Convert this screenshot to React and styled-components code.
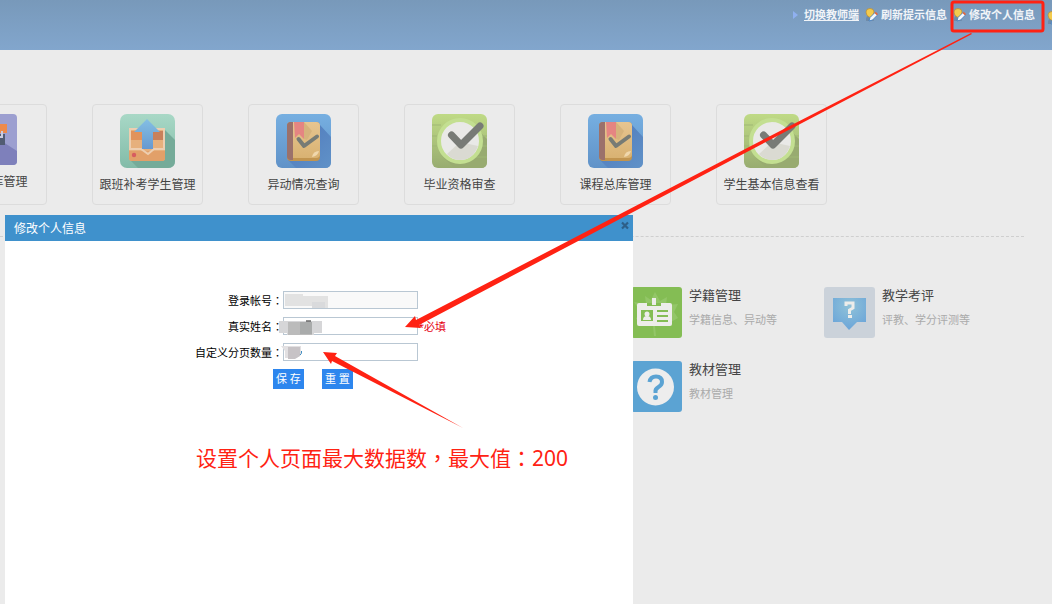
import React from "react"
import styled, { createGlobalStyle } from "styled-components"

const GlobalStyle = createGlobalStyle`
  * {
    box-sizing: border-box;
  }

  body {
    margin: 0;
    background: #ebebeb;
    font-family: "Noto Sans", "Noto Sans CJK SC", sans-serif;
    font-size: 12px;
    color: #444;
  }
`

const Page = styled.div`
  position: relative;
  min-height: 100vh;
  overflow: hidden;
`

const Header = styled.header`
  height: 50px;
  overflow: hidden;
  background: linear-gradient(#7899ba, #82a6cd);
`

const Toolbar = styled.nav`
  display: flex;
  justify-content: flex-end;
  align-items: center;
  gap: 6px;
  height: 30px;
  margin-right: -8px;
`

const Bullet = styled.span`
  border: 4px solid transparent;
  border-left: 5px solid #8fb0f0;
  border-right: 0;
`

const ToolLink = styled.a`
  display: flex;
  align-items: center;
  gap: 3px;
  color: #f1f4f8;
  font-size: 11px;
  font-weight: bold;
  line-height: 16px;
  white-space: nowrap;
  text-decoration: ${p => (p.$underline ? "underline" : "none")};
`

const CutOff = styled.span`
  display: flex;
  margin: 6px 0 0 6px;
`

const Tiles = styled.div`
  display: flex;
  align-items: stretch;
  gap: 45px;
  margin: 54px 0 0 -64px;
`

const Tile = styled.a`
  display: flex;
  flex: none;
  flex-direction: column;
  align-items: center;
  gap: 9px;
  width: 111px;
  height: 101px;
  padding-top: 9px;
  border: 1px solid #dcdcdc;
  border-radius: 4px;
  color: #444;
  line-height: 16px;
  white-space: nowrap;
  text-decoration: none;

  svg {
    display: block;
    flex: none;
  }
`

const Features = styled.div`
  display: grid;
  grid-template-columns: repeat(5, 1fr);
  row-gap: 23px;
  margin: 31px 28px 0 0;
  padding: 50px 7px 0 52px;
  border-top: 1px dashed #cfcfcf;
`

const Feature = styled.a`
  display: flex;
  gap: 7px;
  grid-column: ${p => p.$column};
  color: #444;
  text-decoration: none;
  white-space: nowrap;

  svg {
    display: block;
    flex: none;
  }
`

const FeatureText = styled.div`
  display: flex;
  flex-direction: column;
  gap: 9px;
  font-size: 13px;
  line-height: 16px;

  small {
    color: #aaa;
    font-size: 11px;
  }
`

const Dialog = styled.section`
  position: absolute;
  top: 215px;
  bottom: 0;
  left: 5px;
  width: 628px;
  background: #fff;
`

const DialogHeader = styled.div`
  display: flex;
  justify-content: space-between;
  height: 26px;
  padding: 0 3px 0 9px;
  background: #3f91cc;
  color: #fff;

  h2 {
    margin: 0;
    font-size: 12px;
    font-weight: normal;
    line-height: 28px;
  }
`

const CloseButton = styled.button`
  width: 10px;
  height: 21px;
  padding: 0;
  border: 0;
  background: none;

  svg {
    display: block;
  }
`

const Form = styled.form`
  display: flex;
  flex-direction: column;
  gap: 8px;
  padding-top: 50px;
`

const Field = styled.div`
  display: flex;
  align-items: center;
  height: 18px;
  color: #000;
  font-size: 11px;

  label {
    width: 278px;
    text-align: right;
  }
`

const Mark = styled.span`
  font-family: "Noto Sans CJK TC", sans-serif;
`

const Box = styled.div`
  position: relative;

  input {
    display: block;
    width: 135px;
    height: 18px;
    padding: 0 3px;
    border: 1px solid #b9c7d3;
    background: ${p => (p.$muted ? "#f9f9f9" : "#fff")};
    font-size: 11px;
  }

  svg {
    position: absolute;
    top: 0;
    left: -4px;
  }
`

const Required = styled.span`
  color: #e60012;
`

const Actions = styled.div`
  display: flex;
  gap: 18px;
  padding-left: 268px;
`

const Button = styled.button`
  height: 20px;
  padding: 0 3px;
  border: 0;
  background: #2d86ee;
  color: #fff;
  font-family: inherit;
  font-size: 11px;
  line-height: 18px;
`

const Note = styled.p`
  margin: 53px 0 0 191px;
  color: #ff2213;
  font-size: 21px;
  line-height: 30px;
  white-space: nowrap;
`

const Arrows = styled.svg`
  position: absolute;
  top: 0;
  left: 0;
  pointer-events: none;
`

const EditIcon = () => (
  <svg width="13" height="14" viewBox="0 0 13 14">
    <path d="M1 13q-.5-5 3-5.500h3l2 5.500z" fill="#6f8ba8" />
    <path d="M1 4q0-3.500 4-3.500T9 4q0 4-4 5.500Q1 8 1 4z" fill="#f3cb4d" stroke="#b98b30" strokeWidth=".7" />
    <path d="M4 13l1-3.500L10 4.500l2.500 2.500-5 5z" fill="#f4f8fc" stroke="#3a78bd" strokeWidth=".8" />
    <path d="M9.500 5l1.300-1.300 2.200 2.200-1.200 1.300z" fill="#e5663d" />
  </svg>
)

const PackageIcon = () => (
  <svg width="55" height="54" viewBox="0 0 55 54">
    <defs>
      <linearGradient id="mint" x2="0" y2="1">
        <stop stopColor="#a8d8c6" />
        <stop offset="1" stopColor="#82bba8" />
      </linearGradient>
      <linearGradient id="up" x2="0" y2="1">
        <stop stopColor="#84bfe4" />
        <stop offset="1" stopColor="#6799d0" />
      </linearGradient>
    </defs>
    <rect width="55" height="54" rx="7" fill="url(#mint)" />
    <path d="M45 16l10 10v21q0 7-7 7H18L10 46z" fill="#75ab99" />
    <rect x="9" y="14" width="36" height="33" rx="3" fill="#e6b07c" />
    <path d="M9 37h36v7q0 3-3 3H12q-3 0-3-3z" fill="#e2a069" />
    <path d="M11 17h16v9H11z" fill="#e1935c" />
    <path d="M27 17h16v9H27z" fill="#c9805a" />
    <path d="M10 15h34v20H34l-6 5-7-5H10z" fill="none" stroke="#edceb0" strokeWidth="2" />
    <circle cx="14" cy="41" r="2.200" fill="#d75d60" />
    <path d="M27 5l13 13h-7v17H22V18h-8z" fill="url(#up)" />
  </svg>
)

const BookIcon = () => (
  <svg width="55" height="54" viewBox="0 0 55 54">
    <defs>
      <linearGradient id="sky" x2="0" y2="1">
        <stop stopColor="#76afe1" />
        <stop offset="1" stopColor="#6092c8" />
      </linearGradient>
      <linearGradient id="shade" x2="1" y2="1">
        <stop stopColor="#4f78bb" />
        <stop offset="1" stopColor="#6092c8" />
      </linearGradient>
      <linearGradient id="cover" x2="0" y2="1">
        <stop stopColor="#e7c590" />
        <stop offset="1" stopColor="#d9b272" />
      </linearGradient>
    </defs>
    <rect width="55" height="54" rx="6" fill="url(#sky)" />
    <path d="M44 11l11 12v25q0 6-6 6H20l-8-8z" fill="url(#shade)" />
    <rect x="11" y="8" width="33" height="39" rx="4" fill="#c1944f" />
    <path d="M17 8h23q4 0 4 4v28q0 4-4 4H17z" fill="url(#cover)" />
    <path d="M15 8h2v38h-2q-4 0-4-4V12q0-4 4-4z" fill="#9b716b" />
    <path d="M28 8l8 9-5 9-3-1z" fill="#d6b37c" />
    <path d="M18 8h10v17l-5-5-4 4z" fill="#e58582" />
    <path d="M22.500 25l5.500 7 13-9.500" fill="none" stroke="#777b75" strokeWidth="4" strokeLinecap="round" strokeLinejoin="round" />
    <path d="M36 43q1-6 7-6-1 5-7 6z" fill="#f0d7ac" />
  </svg>
)

const CheckIcon = () => (
  <svg width="55" height="54" viewBox="0 0 55 54">
    <defs>
      <linearGradient id="leaf" x2="0" y2="1">
        <stop stopColor="#bfda85" />
        <stop offset="1" stopColor="#98ac70" />
      </linearGradient>
    </defs>
    <rect width="55" height="54" rx="6" fill="url(#leaf)" />
    <path d="M46 16l9 9v23q0 6-6 6H22L11 43z" fill="#98ab70" />
    <path d="M0 11h9M0 22h5M0 32h5M0 43h10M49 22h6M49 32h6M44 43h11" stroke="#9fb775" />
    <circle cx="28" cy="27" r="21" fill="#e9e9e7" stroke="#c3df91" strokeWidth="4" />
    <path d="M28 28l18 4q-5 14-18 14-8 0-13-6z" fill="#dadad2" />
    <path d="M19.500 21l9.500 10L48 12" fill="none" stroke="#787b76" strokeWidth="7" strokeLinecap="round" strokeLinejoin="round" />
  </svg>
)

const ArchiveIcon = () => (
  <svg width="51" height="51" viewBox="0 0 51 51">
    <rect width="51" height="51" rx="4" fill="#9c9fd0" />
    <path d="M37 28l14 9v10q0 4-4 4H0z" fill="#7e80bb" />
    <path d="M27 10h14v9H27z" fill="#ed8a4b" />
    <path d="M22 20h17v11H22z" fill="#515c73" />
    <path d="M30 23h6v-6" fill="none" stroke="#c8cce0" strokeWidth="2" />
  </svg>
)

const CardIcon = () => (
  <svg width="51" height="51" viewBox="0 0 51 51">
    <rect width="51" height="51" rx="3" fill="#84bd54" />
    <path d="M24 5l5 9 7-4-1 8 12-1-4 8 4 6-14 8h-9l1 10h-2l-1-10-17-7 4-8-6-9 12 2-1-8 6 4z" fill="#93c668" />
    <rect x="6" y="16" width="35" height="23" rx="2" fill="#ededea" />
    <path d="M16 16h14v3H16z" fill="#84bd54" />
    <path d="M21 11h4v7h-4z" fill="#ededea" />
    <rect x="10" y="23" width="12" height="11" fill="#84bd54" />
    <circle cx="16" cy="27" r="2.500" fill="#ededea" />
    <path d="M12 33q0-4 4-4t4 4z" fill="#ededea" />
    <path d="M26 24h11M26 29h11M26 34h11" stroke="#84bd54" strokeWidth="2" />
  </svg>
)

const HelpIcon = () => (
  <svg width="51" height="51" viewBox="0 0 51 51">
    <rect width="51" height="51" rx="3" fill="#5ba3d3" />
    <circle cx="24.500" cy="26" r="18.500" fill="#ededed" />
    <path d="M18.500 21q1-5.500 6.500-5.500 6 0 6 5.500 0 3-3.500 5T24.500 31v1" fill="none" stroke="#5ba3d3" strokeWidth="4" />
    <circle cx="24.500" cy="36.500" r="2.500" fill="#5ba3d3" />
  </svg>
)

const ReviewIcon = () => (
  <svg width="51" height="51" viewBox="0 0 51 51">
    <defs>
      <radialGradient id="bubble" cx=".5" cy=".25" r=".75">
        <stop stopColor="#90c2d8" />
        <stop offset="1" stopColor="#6ba5d9" />
      </radialGradient>
    </defs>
    <rect width="51" height="51" rx="3" fill="#cbd2da" />
    <path d="M9 11h33v24h-9l-8 8-7-8H9z" fill="url(#bubble)" />
    <path d="M22 19v-3h7v5l-3.500 2v4" fill="none" stroke="#ededea" strokeWidth="3" />
    <path d="M24 28h4v3h-4z" fill="#ededea" />
  </svg>
)

const tiles = [
  { label: "课程分库管理", Icon: ArchiveIcon },
  { label: "跟班补考学生管理", Icon: PackageIcon },
  { label: "异动情况查询", Icon: BookIcon },
  { label: "毕业资格审查", Icon: CheckIcon },
  { label: "课程总库管理", Icon: BookIcon },
  { label: "学生基本信息查看", Icon: CheckIcon },
]

const features = [
  { title: "学籍管理", text: "学籍信息、异动等", column: 4, Icon: CardIcon },
  { title: "教学考评", text: "评教、学分评测等", column: 5, Icon: ReviewIcon },
  { title: "教材管理", text: "教材管理", column: 4, Icon: HelpIcon },
]

const App = () => (
  <Page>
    <GlobalStyle />
    <Header>
      <Toolbar>
        <Bullet />
        <ToolLink href="#teacher" $underline>
          切换教师端
        </ToolLink>
        <ToolLink href="#refresh">
          <EditIcon />
          刷新提示信息
        </ToolLink>
        <ToolLink href="#profile">
          <EditIcon />
          修改个人信息
        </ToolLink>
        <CutOff>
          <EditIcon />
        </CutOff>
      </Toolbar>
    </Header>

    <Tiles>
      {tiles.map(({ label, Icon }) => (
        <Tile href="#tile" key={label}>
          <Icon />
          {label}
        </Tile>
      ))}
    </Tiles>

    <Features>
      {features.map(({ title, text, column, Icon }) => (
        <Feature href="#feature" key={title} $column={column}>
          <Icon />
          <FeatureText>
            {title}
            <small>{text}</small>
          </FeatureText>
        </Feature>
      ))}
    </Features>

    <Dialog role="dialog" aria-labelledby="dialog-title">
      <DialogHeader>
        <h2 id="dialog-title">修改个人信息</h2>
        <CloseButton type="button" aria-label="关闭">
          <svg width="10" height="21" viewBox="0 0 10 21">
            <path d="M2 7.500l6 6M8 7.500l-6 6" stroke="#2d5f88" strokeWidth="2.200" />
          </svg>
        </CloseButton>
      </DialogHeader>
      <Form>
        <Field>
          <label htmlFor="account">
            登录帐号<Mark>{"\uff1a"}</Mark>
          </label>
          <Box $muted>
            <input id="account" readOnly />
            <svg width="50" height="18">
              <path d="M6 3h18v2h25v12H33v-2H6z" fill="#e2e2e2" />
              <path d="M33 11h13v6H33z" fill="#d9dadc" />
            </svg>
          </Box>
        </Field>
        <Field>
          <label htmlFor="realname">
            真实姓名<Mark>{"\uff1a"}</Mark>
          </label>
          <Box>
            <input id="realname" />
            <svg width="50" height="18">
              <path d="M0 4h43v12H35v2H8v-2H0z" fill="#d6d6d8" />
              <path d="M9 5h24v13H9z" fill="#bbb" />
              <path d="M21 5h12v12H21z" fill="#a9abab" />
              <path d="M27 4h5" stroke="#222" />
            </svg>
          </Box>
          <Required>*必填</Required>
        </Field>
        <Field>
          <label htmlFor="pagesize">
            自定义分页数量<Mark>{"\uff1a"}</Mark>
          </label>
          <Box>
            <input id="pagesize" />
            <svg width="50" height="18">
              <path d="M2 3h20v9l-5 3H6V8z" fill="#e2e0e2" />
              <path d="M9 4h12v9l-5 3H9z" fill="#c7c3c6" />
              <path d="M21 12q2-1 1.500-4" fill="none" stroke="#3a8ac0" />
            </svg>
          </Box>
        </Field>
        <Actions>
          <Button type="button">保 存</Button>
          <Button type="reset">重 置</Button>
        </Actions>
      </Form>
      <Note>
        设置个人页面最大数据数<Mark>{"\uff0c"}</Mark>最大值<Mark>{"\uff1a"}</Mark>200
      </Note>
    </Dialog>

    <Arrows width="1052" height="604" viewBox="0 0 1052 604" fill="#ff2213">
      <rect x="952" y="2" width="91" height="29" rx="2" fill="none" stroke="#ff2213" strokeWidth="3" />
      <path d="M405 327l10-11 1 4L780 131 971 33l1 1L781 134 419 325l2 3z" />
      <path d="M323 352l14 1-2 3L463 428 332 361l-1 3z" />
    </Arrows>
  </Page>
)

export default App
